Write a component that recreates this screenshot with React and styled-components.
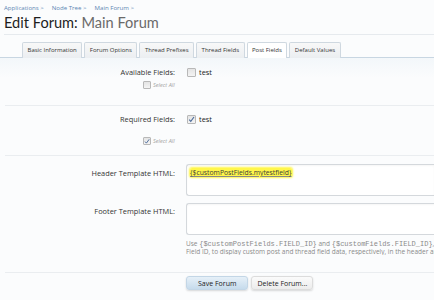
import React from "react";
import styled, { createGlobalStyle } from "styled-components";

const Global = createGlobalStyle`
  html, body { margin: 0; padding: 0; background: #fbfcfd; }
  body { font-family: "Open Sans", "DejaVu Sans", sans-serif; color: #222; }
  * { box-sizing: border-box; }
`;

const Page = styled.div`
  width: 434px;
  height: 300px;
  overflow: hidden;
  display: flex;
  flex-direction: column;
`;

const Crumbs = styled.div`
  display: flex;
  gap: 8px;
  padding: 3px 0 0 4px;
  height: 12px;
  font-size: 6.1px;
  line-height: 9px;
  color: #5b86b3;
`;

const Title = styled.h1`
  margin: 0;
  padding: 1px 0 0 4px;
  font-family: "Lato", "Open Sans", sans-serif;
  font-weight: 400;
  font-size: 14.6px;
  line-height: 20px;
  color: #1e1e1e;
  span { color: #6a6a6a; }
`;

const TitleRule = styled.div`
  margin: 1px 0 0 4px;
  height: 1px;
  background: #e6eaee;
`;

const TabBar = styled.div`
  margin-top: 7px;
  display: flex;
  gap: 2px;
  padding-left: 22px;
  border-bottom: 1px solid #c8d6e2;
  height: 16px;
`;

const Tab = styled.div`
  padding: 0 4.5px;
  font-size: 6px;
  line-height: 15px;
  color: #333;
  border: 1px solid #cfd8e0;
  border-bottom: ${(p) => (p.$active ? "1px solid #fff" : "none")};
  border-radius: 2px 2px 0 0;
  background: ${(p) => (p.$active ? "#fff" : "linear-gradient(#f8f8f8, #ebeef1)")};
  margin-bottom: ${(p) => (p.$active ? "-1px" : "0")};
  height: ${(p) => (p.$active ? "17px" : "16px")};
`;

const Body = styled.div`
  background: linear-gradient(#f3f7fa, #fbfcfd 20px);
  flex: 1;
`;

const Row = styled.div`
  display: grid;
  grid-template-columns: 175px 1fr;
  column-gap: 11px;
  align-items: ${(p) => (p.$top ? "start" : "center")};
  padding-top: ${(p) => p.$pt || 0}px;
`;

const Label = styled.div`
  text-align: right;
  font-size: 7.4px;
  color: #333;
  line-height: 12px;
  padding-top: ${(p) => p.$pt || 0}px;
`;

const Check = styled.span`
  display: inline-flex;
  align-items: center;
  justify-content: center;
  width: ${(p) => p.$s || 9}px;
  height: ${(p) => p.$s || 9}px;
  border: 1px solid #b8b8b8;
  background: linear-gradient(#e4e4e4, #f4f4f4);
  border-radius: 1px;
  flex-shrink: 0;
`;

const CheckItem = styled.div`
  display: flex;
  align-items: center;
  gap: 3px;
  font-size: 7.4px;
  color: #222;
  line-height: 12px;
  padding-left: 1px;
`;

const SelectAll = styled.div`
  display: flex;
  align-items: center;
  gap: 2px;
  padding-left: 143px;
  margin-top: ${(p) => p.$mt || 0}px;
  font-size: 5.6px;
  font-style: italic;
  color: #a0a0a0;
  line-height: 10px;
`;

const Sep = styled.div`
  margin: ${(p) => p.$m || "0"};
  margin-left: 5px;
  height: 1px;
  background: #eaedf0;
`;

const TextArea = styled.div`
  height: ${(p) => p.$h}px;
  border: 1px solid #d4d8dc;
  border-right: none;
  border-radius: 3px 0 0 3px;
  background: #fff;
  padding: 3px 3px;
  font-size: 6.8px;
  line-height: 10px;
  box-shadow: inset 0 1px 2px rgba(0,0,0,0.04);
`;

const Mark = styled.span`
  background: #fff64a;
  box-shadow: 0 0 2px 1px #fff64a;
  border-radius: 2px;
  color: #3a3a3a;
  text-decoration: underline;
  text-decoration-color: #888;
`;

const Explain = styled.div`
  margin-top: 5px;
  font-size: 6.5px;
  line-height: 7px;
  color: #8a8a8a;
  white-space: nowrap;
  overflow-x: hidden;
  code { font-family: "Liberation Mono", monospace; font-size: 7px; line-height: 7px; }
`;

const Buttons = styled.div`
  display: flex;
  gap: 3px;
  padding-left: 186px;
  margin-top: 3px;
`;

const Button = styled.div`
  height: 14px;
  padding: 0 ${(p) => p.$px}px;
  border-radius: 3px;
  font-size: 7px;
  line-height: 13px;
  color: #222;
  border: 1px solid ${(p) => (p.$primary ? "#c3d6e6" : "#dcdcdc")};
  background: ${(p) => (p.$primary ? "linear-gradient(#e6f0f8, #c6dbec)" : "linear-gradient(#fbfbfb, #ececec)")};
  box-shadow: 0 1px 2px rgba(0,0,0,0.15);
`;

const Tick = () => (
  <svg width="7" height="7" viewBox="0 0 7 7">
    <path d="M1.2 3.6 L2.8 5.4 L6 1" stroke="#4a6a9a" strokeWidth="1.1" fill="none" />
  </svg>
);

export default function App() {
  return (
    <Page>
      <Global />
      <Crumbs>
        <span>Applications &gt;</span>
        <span>Node Tree &gt;</span>
        <span>Main Forum &gt;</span>
      </Crumbs>
      <Title>
        Edit Forum: <span>Main Forum</span>
      </Title>
      <TitleRule />
      <TabBar>
        <Tab>Basic Information</Tab>
        <Tab>Forum Options</Tab>
        <Tab>Thread Prefixes</Tab>
        <Tab>Thread Fields</Tab>
        <Tab $active>Post Fields</Tab>
        <Tab>Default Values</Tab>
      </TabBar>
      <Body>
        <Row $pt={8}>
          <Label>Available Fields:</Label>
          <CheckItem>
            <Check />
            test
          </CheckItem>
        </Row>
        <SelectAll $mt={2}>
          <Check $s={8} />
          Select All
        </SelectAll>
        <Sep $m="15px 0 0 5px" />
        <Row $pt={7}>
          <Label>Required Fields:</Label>
          <CheckItem>
            <Check>
              <Tick />
            </Check>
            test
          </CheckItem>
        </Row>
        <SelectAll $mt={11}>
          <Check $s={8}>
            <Tick />
          </Check>
          Select All
        </SelectAll>
        <Sep $m="9px 0 0 5px" />
        <Row $top $pt={8}>
          <Label $pt={3}>Header Template HTML:</Label>
          <TextArea $h={32}>
            <Mark>{"{$customPostFields.mytestfield}"}</Mark>
          </TextArea>
        </Row>
        <Row $top $pt={7}>
          <Label $pt={2}>Footer Template HTML:</Label>
          <div>
            <TextArea $h={32} />
            <Explain>
              Use <code>{"{$customPostFields.FIELD_ID}"}</code> and <code>{"{$customFields.FIELD_ID}"}</code>, where FIELD_ID is the
              <br />
              Field ID, to display custom post and thread field data, respectively, in the header and footer.
            </Explain>
          </div>
        </Row>
        <Sep $m="17px 0 0 5px" />
        <Buttons>
          <Button $primary $px={11}>Save Forum</Button>
          <Button $px={5}>Delete Forum...</Button>
        </Buttons>
      </Body>
    </Page>
  );
}
